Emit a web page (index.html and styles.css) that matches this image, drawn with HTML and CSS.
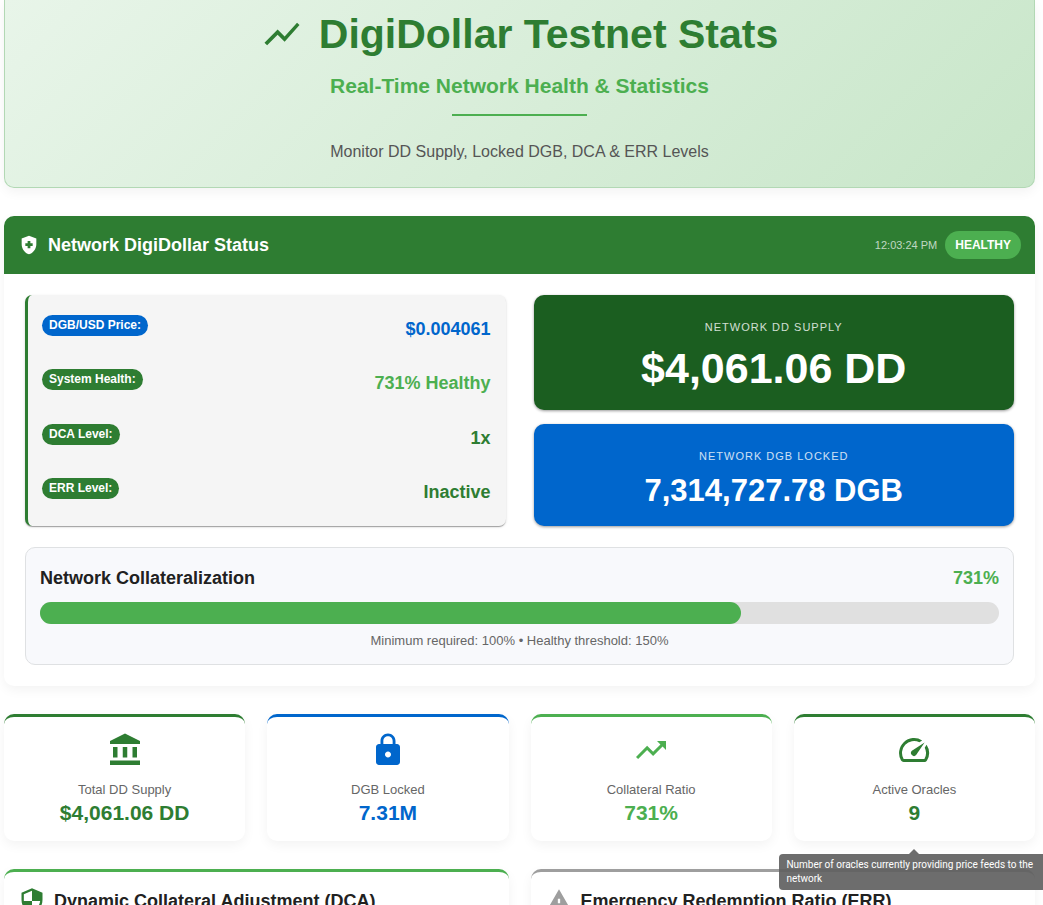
FILE: index.html
```html
<!DOCTYPE html>
<html lang="en">
<head>
<meta charset="utf-8">
<meta name="viewport" content="width=device-width, initial-scale=1">
<title>DigiDollar Testnet Stats</title>
<link rel="stylesheet" href="styles.css">
</head>
<body>
<main class="page">
  <header class="hero">
    <h1 class="hero-title">
      <svg class="icon icon-hero" viewBox="0 0 24 24" aria-hidden="true"><path d="m3.5 18.49 6-6.01 4 4L22 6.92l-1.41-1.41-7.09 7.97-4-4L2 16.99z"/></svg>
      <span>DigiDollar Testnet Stats</span>
    </h1>
    <p class="hero-subtitle">Real-Time Network Health &amp; Statistics</p>
    <hr class="hero-rule">
    <p class="hero-text">Monitor DD Supply, Locked DGB, DCA &amp; ERR Levels</p>
  </header>

  <section class="card status">
    <div class="status-head">
      <svg class="icon icon-head" viewBox="0 0 24 24" aria-hidden="true"><path d="M10.5 13H8v-3h2.5V7.5h3V10H16v3h-2.5v2.5h-3zM12 2 4 5v6.09c0 5.05 3.41 9.76 8 10.91 4.59-1.15 8-5.86 8-10.91V5z" fill-rule="evenodd"/></svg>
      <h2 class="heading">Network DigiDollar Status</h2>
      <time class="clock">12:03:24 PM</time>
      <span class="badge">HEALTHY</span>
    </div>
    <div class="status-body">
      <div class="overview">
        <dl class="metrics">
          <div class="metric"><dt class="tag blue-bg">DGB/USD Price:</dt><dd class="metric-value blue">$0.004061</dd></div>
          <div class="metric"><dt class="tag">System Health:</dt><dd class="metric-value light">731% Healthy</dd></div>
          <div class="metric"><dt class="tag">DCA Level:</dt><dd class="metric-value">1x</dd></div>
          <div class="metric"><dt class="tag">ERR Level:</dt><dd class="metric-value">Inactive</dd></div>
        </dl>
        <div class="totals">
          <div class="total total-dd">
            <p class="total-label">NETWORK DD SUPPLY</p>
            <p class="total-value total-large">$4,061.06 DD</p>
          </div>
          <div class="total total-dgb">
            <p class="total-label">NETWORK DGB LOCKED</p>
            <p class="total-value">7,314,727.78 DGB</p>
          </div>
        </div>
      </div>
      <div class="collateral">
        <div class="collateral-head">
          <h3 class="heading" id="collateral-title">Network Collateralization</h3>
          <span class="heading light">731%</span>
        </div>
        <div class="bar" role="progressbar" aria-labelledby="collateral-title" aria-valuetext="731%"><div class="bar-fill" style="width: 73.1%"></div></div>
        <p class="collateral-note">Minimum required: 100% • Healthy threshold: 150%</p>
      </div>
    </div>
  </section>

  <section class="stats">
    <article class="card stat">
      <svg class="icon icon-stat" viewBox="0 0 24 24" aria-hidden="true"><path d="M4 10h3v7H4zm6.5 0h3v7h-3zM2 19h20v3H2zm15-9h3v7h-3zm-5-9L2 6v2h20V6z"/></svg>
      <p class="stat-label">Total DD Supply</p>
      <p class="stat-value">$4,061.06 DD</p>
    </article>
    <article class="card stat blue">
      <svg class="icon icon-stat" viewBox="0 0 24 24" aria-hidden="true"><path d="M18 8h-1V6c0-2.76-2.24-5-5-5S7 3.24 7 6v2H6c-1.1 0-2 .9-2 2v10c0 1.1.9 2 2 2h12c1.1 0 2-.9 2-2V10c0-1.1-.9-2-2-2m-6 9c-1.1 0-2-.9-2-2s.9-2 2-2 2 .9 2 2-.9 2-2 2m3.1-9H8.9V6c0-1.71 1.39-3.1 3.1-3.1s3.1 1.39 3.1 3.1z"/></svg>
      <p class="stat-label">DGB Locked</p>
      <p class="stat-value">7.31M</p>
    </article>
    <article class="card stat light">
      <svg class="icon icon-stat" viewBox="0 0 24 24" aria-hidden="true"><path d="m16 6 2.29 2.29-4.88 4.88-4-4L2 16.59 3.41 18l6-6 4 4 6.3-6.29L22 12V6z"/></svg>
      <p class="stat-label">Collateral Ratio</p>
      <p class="stat-value">731%</p>
    </article>
    <article class="card stat" aria-describedby="oracle-tip">
      <svg class="icon icon-stat" viewBox="0 0 24 24" aria-hidden="true"><path d="m20.38 8.57-1.23 1.85a8 8 0 0 1-.22 7.58H5.07A8 8 0 0 1 15.58 6.85l1.85-1.23A10 10 0 0 0 3.35 19a2 2 0 0 0 1.72 1h13.85a2 2 0 0 0 1.74-1 10 10 0 0 0-.27-10.44zm-9.79 6.84a2 2 0 0 0 2.83 0l5.66-8.49-8.49 5.66a2 2 0 0 0 0 2.83"/></svg>
      <p class="stat-label">Active Oracles</p>
      <p class="stat-value">9</p>
      <div class="tooltip" role="tooltip" id="oracle-tip">Number of oracles currently providing price feeds to the network</div>
    </article>
  </section>

  <section class="details">
    <article class="card detail light">
      <svg class="icon icon-detail green" viewBox="0 0 24 24" aria-hidden="true"><path d="M12 1 3 5v6c0 5.55 3.84 10.74 9 12 5.16-1.26 9-6.45 9-12V5zm0 10.99h7c-.53 4.12-3.28 7.79-7 8.94V12H5V6.3l7-3.11z"/></svg>
      <h2 class="heading dark">Dynamic Collateral Adjustment (DCA)</h2>
    </article>
    <article class="card detail gray">
      <svg class="icon icon-detail" viewBox="0 0 24 24" aria-hidden="true"><path d="M1 21h22L12 2zm12-3h-2v-2h2zm0-4h-2v-4h2z"/></svg>
      <h2 class="heading dark">Emergency Redemption Ratio (ERR)</h2>
    </article>
  </section>
</main>
</body>
</html>
```
FILE: styles.css
```css
* { box-sizing: border-box; }

html, body {
  height: 100%;
  overflow: hidden;
}

body {
  margin: 0;
  background: #fff;
  color: #212121;
  font-family: "Liberation Sans", Arial, sans-serif;
}

h1, h2, h3, p, dl, dd { margin: 0; }

.page {
  display: flex;
  flex-direction: column;
  gap: 28px;
  padding: 0 8px 28px 4px;
}

.icon { flex: none; fill: currentColor; }
.icon-hero { width: 42px; height: 42px; }
.icon-head { width: 22px; height: 22px; }
.icon-stat { width: 36px; height: 36px; }
.icon-detail { width: 28px; height: 28px; }

.green { color: #2e7d32; }
.blue { color: #0066cc; }
.light { color: #4caf50; }
.gray { color: #9e9e9e; }
.dark { color: #212121; }

.heading {
  font-size: 18px;
  line-height: 28px;
  font-weight: 700;
}

.card {
  background: #fff;
  border-radius: 10px;
  box-shadow: 0 4px 12px rgba(0, 0, 0, 0.05);
}

/* Hero */
.hero {
  display: flex;
  flex-direction: column;
  align-items: center;
  padding: 9px 28px 21px;
  border: 1px solid #b2d8b4;
  border-top: 0;
  border-radius: 0 0 10px 10px;
  background: linear-gradient(135deg, #e8f5e9 0%, #c8e6c9 100%);
  box-shadow: 0 4px 12px rgba(0, 0, 0, 0.05);
  text-align: center;
}

.hero-title {
  display: flex;
  align-items: center;
  gap: 16px;
  color: #2e7d32;
  font-size: 41px;
  line-height: 50px;
}

.hero-subtitle {
  margin-top: 13px;
  color: #4caf50;
  font-size: 21px;
  line-height: 28px;
  font-weight: 700;
}

.hero-rule {
  width: 135px;
  height: 2px;
  margin: 14px 0 22px;
  border: 0;
  background: #4caf50;
}

.hero-text {
  color: #555;
  font-size: 16px;
  line-height: 28px;
}

/* Network status */
.status-head {
  display: flex;
  align-items: center;
  gap: 8px;
  padding: 15px 14px;
  border-radius: 10px 10px 0 0;
  background: #2e7d32;
  color: #fff;
}

.clock {
  margin-left: auto;
  color: #c0d8c2;
  font-size: 11px;
}

.badge {
  padding: 0 10px;
  border-radius: 14px;
  background: #4caf50;
  font-size: 12px;
  line-height: 28px;
  font-weight: 700;
}

.status-body {
  display: flex;
  flex-direction: column;
  gap: 21px;
  padding: 21px;
}

.overview {
  display: grid;
  grid-template-columns: 1fr 1fr;
  gap: 28px;
}

.metrics {
  display: flex;
  flex-direction: column;
  justify-content: space-between;
  padding: 7px 15px 7px 14px;
  border-left: 3px solid #2e7d32;
  border-radius: 7px;
  background: #f5f5f5;
  box-shadow: 0 2px 1px -1px rgba(0, 0, 0, 0.2), 0 1px 1px rgba(0, 0, 0, 0.14), 0 1px 3px rgba(0, 0, 0, 0.12);
}

.metric {
  display: flex;
  align-items: flex-start;
  justify-content: space-between;
  padding: 13px 0;
}

.tag {
  padding: 0 7px;
  border-radius: 11px;
  background: #2e7d32;
  color: #fff;
  font-size: 12px;
  line-height: 21px;
  font-weight: 700;
}

.blue-bg { background: #0066cc; }

.metric-value {
  font-size: 18px;
  line-height: 28px;
  font-weight: 700;
}

.metric-value:not(.blue):not(.light) { color: #2e7d32; }

.totals {
  display: flex;
  flex-direction: column;
  gap: 14px;
}

.total {
  padding: 21px 14px 12px;
  border-radius: 10px;
  color: #fff;
  text-align: center;
  box-shadow: 0 1px 3px rgba(0, 0, 0, 0.4);
}

.total-dd { background: #1b5e20; }
.total-dgb { background: #0066cc; }

.total-label {
  font-size: 11px;
  line-height: 22px;
  letter-spacing: 1px;
  opacity: 0.8;
}

.total-value {
  font-size: 31px;
  line-height: 47px;
  font-weight: 700;
}

.total-large {
  font-size: 43px;
  line-height: 60px;
}

.collateral {
  padding: 14px 14px 13px;
  border: 1px solid #dfe1e3;
  border-radius: 10px;
  background: #f8f9fc;
}

.collateral-head {
  display: flex;
  justify-content: space-between;
  padding: 2px 0 10px;
}

.bar {
  height: 22px;
  border-radius: 11px;
  background: #e0e0e0;
}

.bar-fill {
  height: 22px;
  border-radius: 11px;
  background: #4caf50;
}

.collateral-note {
  margin-top: 7px;
  color: #666;
  font-size: 13px;
  line-height: 20px;
  text-align: center;
}

/* Stat cards */
.stats {
  display: grid;
  grid-template-columns: repeat(4, 1fr);
  gap: 22px;
}

.stat {
  position: relative;
  display: flex;
  flex-direction: column;
  align-items: center;
  padding: 15px 14px 16px;
  border-top: 3px solid currentColor;
}

.stat:not(.blue):not(.light) { color: #2e7d32; }

.stat-label {
  margin-top: 12px;
  color: #666;
  font-size: 13px;
  line-height: 20px;
}

.stat-value {
  font-size: 21px;
  line-height: 25px;
  font-weight: 700;
}

.tooltip {
  position: absolute;
  z-index: 1;
  top: 137px;
  left: 50%;
  width: 270px;
  margin-left: -135px;
  padding: 4px 7px;
  border-radius: 4px;
  background: rgba(97, 97, 97, 0.92);
  color: #fff;
  font-family: Roboto, sans-serif;
  font-size: 10px;
  line-height: 14px;
}

.tooltip::before {
  content: "";
  position: absolute;
  bottom: 100%;
  left: 50%;
  margin-left: -5px;
  border: 5px solid transparent;
  border-top: 0;
  border-bottom-color: rgba(97, 97, 97, 0.92);
}

/* Detail cards */
.details {
  display: grid;
  grid-template-columns: 1fr 1fr;
  gap: 22px;
}

.detail {
  display: flex;
  align-items: center;
  gap: 8px;
  padding: 15px 14px;
  border-top: 3px solid currentColor;
}
```
